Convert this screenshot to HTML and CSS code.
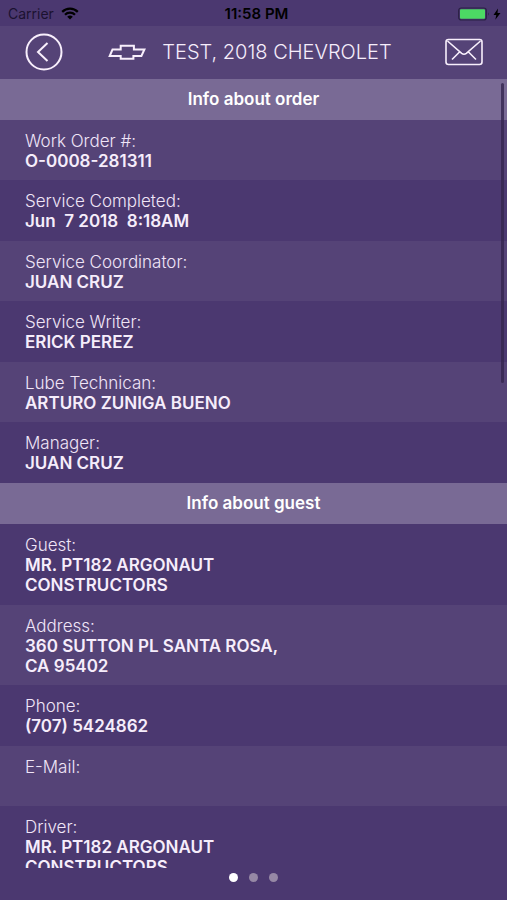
FILE: index.html
```html
<!DOCTYPE html>
<html lang="en">
<head>
<meta charset="utf-8">
<meta name="viewport" content="width=device-width, initial-scale=1">
<title>Work order</title>
<link rel="stylesheet" href="styles.css">
</head>
<body>
<div class="status">
  <div class="status-side">
    <span class="carrier">Carrier</span>
    <svg class="wifi" viewBox="0 0 18 13" width="18" height="13" aria-hidden="true"><path d="M1.2 4.9a11 11 0 0 1 15.6 0M4 7.8a7 7 0 0 1 10 0" fill="none" stroke="#000" stroke-width="2.2"/><path d="M9 12.6 6.2 9.8a4 4 0 0 1 5.6 0z"/></svg>
  </div>
  <span class="clock">11:58 PM</span>
  <div class="status-side status-end">
    <svg viewBox="0 0 44 14" width="44" height="14" aria-hidden="true"><rect x=".7" y="1" width="27.6" height="12" rx="2.5" fill="none" stroke="#2b2144" stroke-width="1.2"/><rect x="2" y="2.3" width="25" height="9.4" rx="1" fill="#4cd964"/><path d="M30 5.2q1.6 1.8 0 3.6z" fill="#2b2144"/><path d="M40 1.5 35.500 8h2.800l-1 4.800L42.500 6h-3z"/></svg>
  </div>
</div>
<header class="bar">
  <button class="icon-button" aria-label="Back"><svg viewBox="0 0 38 38" width="38" height="38"><circle cx="19" cy="19" r="17.500"/><path d="M22.500 10 13 19l9.500 9"/></svg></button>
  <h1 class="title">
    <svg class="bowtie" viewBox="0 0 38 16" width="38" height="16" aria-hidden="true"><path d="M4.500 5.500h8.200V1.700h13.200v3.800h10.500l-3 6.500h-8v2.700H12.700V12H1.700z"/></svg>
    <span>TEST, 2018 CHEVROLET</span>
  </h1>
  <button class="icon-button" aria-label="Mail"><svg class="mail" viewBox="0 0 38 28" width="38" height="28"><rect x="1" y="1.500" width="36" height="25" rx="2.500"/><path d="m2.500 3 14.200 12.300q2.300 1.900 4.600 0L35.500 3M7 21.500l7.500-7.500M31 21.500 23.500 14"/></svg></button>
</header>
<main class="list">
  <section>
    <h2>Info about order</h2>
    <dl class="rows light-first">
      <div><dt>Work Order #:</dt><dd>O-0008-281311</dd></div>
      <div><dt>Service Completed:</dt><dd>Jun  7 2018  8:18AM</dd></div>
      <div><dt>Service Coordinator:</dt><dd>JUAN CRUZ</dd></div>
      <div><dt>Service Writer:</dt><dd>ERICK PEREZ</dd></div>
      <div><dt>Lube Technican:</dt><dd>ARTURO ZUNIGA BUENO</dd></div>
      <div><dt>Manager:</dt><dd>JUAN CRUZ</dd></div>
    </dl>
  </section>
  <section>
    <h2>Info about guest</h2>
    <dl class="rows dark-first">
      <div><dt>Guest:</dt><dd>MR. PT182 ARGONAUT CONSTRUCTORS</dd></div>
      <div><dt>Address:</dt><dd>360 SUTTON PL SANTA ROSA, CA 95402</dd></div>
      <div><dt>Phone:</dt><dd>(707) 5424862</dd></div>
      <div><dt>E-Mail:</dt><dd></dd></div>
      <div><dt>Driver:</dt><dd>MR. PT182 ARGONAUT CONSTRUCTORS</dd></div>
    </dl>
  </section>
  <div class="scrollbar"></div>
</main>
<nav class="pages" aria-label="Pages">
  <button class="dot current" aria-label="Page 1"></button>
  <button class="dot" aria-label="Page 2"></button>
  <button class="dot" aria-label="Page 3"></button>
</nav>
</body>
</html>
```
FILE: styles.css
```css
* { box-sizing: border-box; margin: 0; padding: 0; }

body {
  display: flex;
  flex-direction: column;
  height: 100vh;
  overflow: hidden;
  background: #4b3870;
  color: #f6edfb;
  font-family: Inter, "Liberation Sans", sans-serif;
  font-size: 17px;
  line-height: 20px;
}

button { border: 0; background: none; cursor: pointer; }
svg { display: block; }

.status {
  display: flex;
  align-items: center;
  height: 26px;
  padding: 1px 5px 0 8px;
  color: #000;
  font-size: 14px;
}
.status-side { display: flex; flex: 1; align-items: center; gap: 7px; }
.status-end { justify-content: flex-end; }
.carrier { color: #1b1230; }
.clock { margin-left: 3px; font-size: 15px; font-weight: 600; }

.bar {
  display: flex;
  align-items: center;
  justify-content: space-between;
  height: 53px;
  padding: 0 24px 2px 25px;
  background: #554377;
}
.icon-button svg, .bowtie {
  fill: none;
  stroke: #f8effc;
  stroke-width: 2;
}
.icon-button .mail { stroke-width: 1.6; }
.title {
  display: flex;
  align-items: center;
  gap: 16px;
  margin-right: 8px;
  font-size: 20px;
  font-weight: 350;
}

.list { position: relative; flex: 1; min-height: 0; overflow: hidden; }
h2 {
  padding: 10px 0 11px;
  background: #796a95;
  color: #fff;
  font-size: 17px;
  font-weight: 600;
  text-align: center;
}
.rows > div { padding: 11px 25px 9px; }
.light-first > :nth-child(odd), .dark-first > :nth-child(even) { background: #554377; }
.light-first > :nth-child(even), .dark-first > :nth-child(odd) { padding-bottom: 10px; }
dt { color: #f0e5f7; font-weight: 350; }
dd {
  max-width: 60%;
  min-height: 20px;
  font-weight: 600;
  white-space: pre-wrap;
}
.scrollbar {
  position: absolute;
  top: 4px;
  right: 3px;
  width: 3px;
  height: 38%;
  border-radius: 2px;
  background: #35254f;
  opacity: 0.8;
}

.pages {
  display: flex;
  justify-content: center;
  gap: 11px;
  height: 32px;
  padding-top: 5px;
}
.dot { width: 9px; height: 9px; border-radius: 50%; background: #9688a5; }
.current { background: #fff; }
```
